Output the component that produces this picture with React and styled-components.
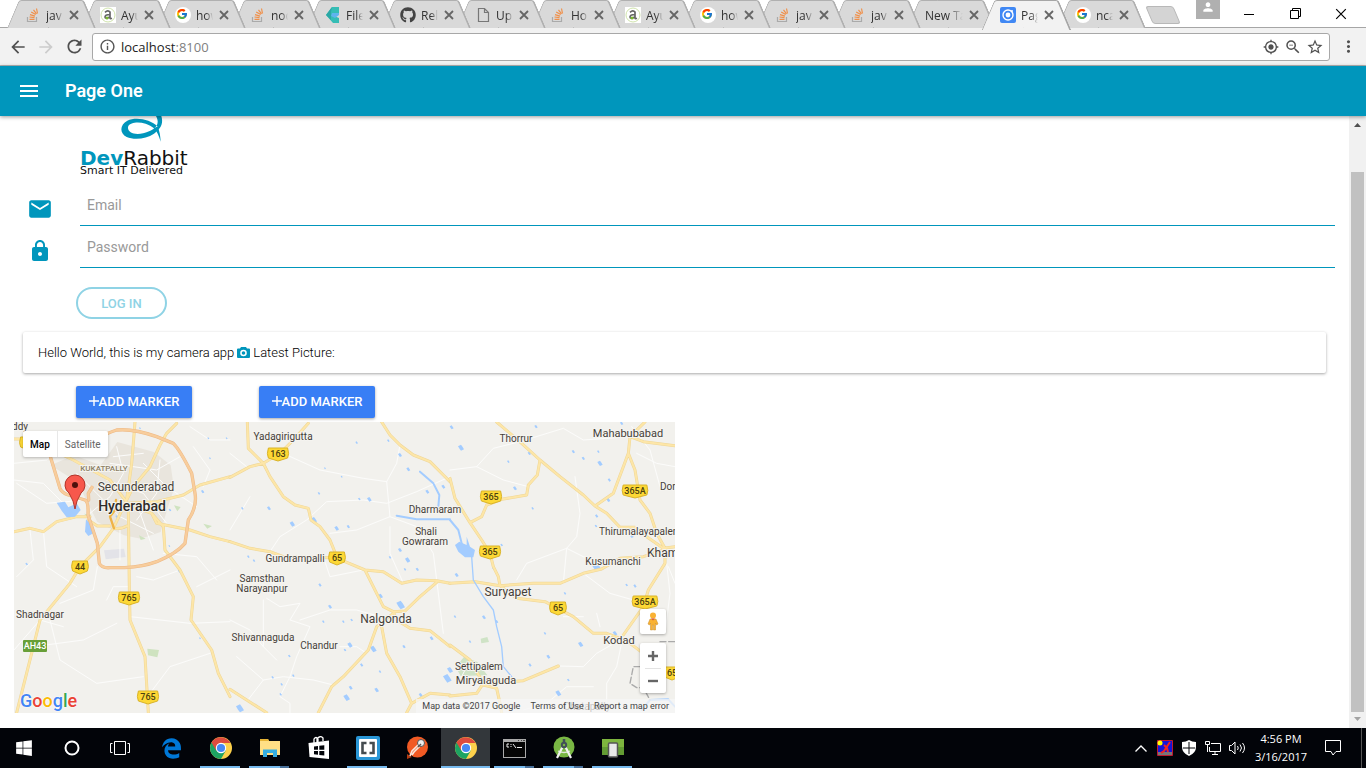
import React from "react";
import styled, { createGlobalStyle, css } from "styled-components";
import {
  MdArrowBack, MdArrowForward, MdRefresh, MdInfoOutline, MdGpsFixed, MdZoomOut,
  MdStarBorder, MdMoreVert, MdPerson, MdEmail, MdLock, MdMenu,
} from "react-icons/md";
import { FaWindows, FaEdgeLegacy, FaGithub, FaStackOverflow } from "react-icons/fa6";
import { FcGoogle } from "react-icons/fc";

const uiFont = `"Open Sans", "Noto Sans", sans-serif`;
const teal = "#0096bc";

const GlobalStyle = createGlobalStyle`
  * { box-sizing: border-box; }
  body { margin: 0; background: #fff; font-family: Roboto, sans-serif; color: #000; }
  button, input { font-family: inherit; }
  button { border: 0; padding: 0; background: none; cursor: pointer; }
  svg { display: block; flex: none; }
`;

const Desktop = styled.div`
  display: flex;
  flex-direction: column;
  min-height: 100vh;
  overflow: hidden;
`;

/* ---------- browser frame ---------- */

const TabStrip = styled.div`
  display: flex;
  height: 28px;
  padding: 0 2px 0 7px;
  background: #fff;
  border-bottom: 1px solid #a6a6a6;
`;

const tabHalf = css`
  content: "";
  position: absolute;
  z-index: -1;
  top: 0;
  height: ${(p) => (p.$active ? 29 : 27)}px;
  background: ${(p) => (p.$active ? "#f2f2f2" : "#d9d9d9")};
  border: 0 solid ${(p) => (p.$active ? "#a6a6a6" : "#b0b0b0")};
  border-top-width: 1px;
`;

const Tab = styled.div`
  position: relative;
  z-index: ${(p) => p.$level};
  isolation: isolate;
  flex: none;
  display: flex;
  align-items: center;
  gap: 6px;
  width: 89px;
  height: 28px;
  margin-right: -14px;
  padding: 2px 17px 0 18px;
  font: 12px ${uiFont};
  color: #333;
  &::before {
    ${tabHalf}
    left: 6px;
    width: 40px;
    border-left-width: 1px;
    transform: skewX(-23deg);
    border-top-left-radius: 3px;
  }
  &::after {
    ${tabHalf}
    right: 6px;
    width: 45px;
    border-right-width: 2px;
    transform: skewX(23deg);
    border-top-right-radius: 3px;
  }
`;

const TabIcon = styled.span`
  display: flex;
  justify-content: center;
  width: 15px;
`;

const TabTitle = styled.span`
  flex: 1;
  min-width: 0;
  overflow: hidden;
  white-space: nowrap;
  mask-image: linear-gradient(to right, #000 60%, transparent);
`;

const TabClose = styled.button`
  flex: none;
  width: 10px;
  height: 10px;
`;

const NewTabButton = styled.button`
  flex: none;
  width: 28px;
  height: 18px;
  margin: 6px 0 0 17px;
  background: #d4d4d4;
  border: 1px solid #b8b8b8;
  border-radius: 3px;
  transform: skewX(23deg);
`;

const WindowControls = styled.div`
  display: flex;
  margin-left: auto;
`;

const UserBadge = styled.button`
  display: flex;
  justify-content: center;
  width: 24px;
  height: 19px;
  margin-right: 6px;
  background: #b0b0b0;
  color: #fff;
`;

const WindowButton = styled.button`
  display: flex;
  align-items: center;
  justify-content: center;
  width: 46px;
  height: 27px;
`;

const Toolbar = styled.div`
  display: flex;
  align-items: center;
  height: 38px;
  padding-left: 8px;
  background: #f2f2f2;
  border-bottom: 1px solid #b4b4b4;
`;

const ToolButton = styled.button`
  display: flex;
  align-items: center;
  justify-content: center;
  width: ${(p) => p.$width}px;
  height: 28px;
  color: ${(p) => (p.$faded ? "#ccc" : "#505050")};
`;

const AddressBar = styled.div`
  flex: 1;
  display: flex;
  align-items: center;
  height: 28px;
  margin-left: 8px;
  padding: 0 3px 0 6px;
  background: #fff;
  border: 1px solid #a8a8a8;
  border-radius: 3px;
  color: #555;
`;

const Address = styled.div`
  flex: 1;
  padding: 0 5px;
  font: 13px ${uiFont};
  color: #222;
  span { color: #808080; }
`;

/* ---------- app page ---------- */

const AppHeader = styled.header`
  position: relative;
  z-index: 1;
  display: flex;
  align-items: center;
  gap: 24px;
  height: 50px;
  padding-left: 17px;
  background: ${teal};
  color: #fff;
  box-shadow: 0 1px 4px rgba(0, 0, 0, 0.4);
  h1 { margin: 0; font-size: 18px; font-weight: 600; line-height: 24px; }
`;

const MenuButton = styled.button`
  color: #fff;
`;

const Viewport = styled.div`
  flex: 1;
  display: flex;
`;

const Content = styled.main`
  flex: 1;
  min-width: 0;
  padding-bottom: 15px;
`;

const Logo = styled.div`
  display: flex;
  flex-direction: column;
  width: 112px;
  height: 60px;
  margin-left: 80px;
  font-family: "DejaVu Sans", Verdana, sans-serif;
  color: #111;
  svg { margin-left: 40px; }
  strong { color: ${teal}; }
`;

const LogoName = styled.span`
  font-size: 20px;
  line-height: 22px;
  padding-top: 4px;
  height: 22px;
`;

const LogoTagline = styled.span`
  font-size: 11px;
  line-height: 12px;
  white-space: nowrap;
`;

const LoginForm = styled.form`
  margin: 8px 14px 0 0;
`;

const Field = styled.label`
  display: flex;
  color: ${teal};
`;

const FieldIcon = styled.span`
  display: flex;
  align-items: center;
  justify-content: center;
  width: 80px;
  height: 42px;
  padding-top: 8px;
`;

const FieldInput = styled.input`
  flex: 1;
  height: 42px;
  padding: 0 7px;
  border: 0;
  border-bottom: 1px solid ${teal};
  outline: 0;
  background: none;
  font-size: 14px;
  &::placeholder { color: #999; opacity: 1; }
`;

const LoginButton = styled.button`
  display: block;
  width: 91px;
  height: 32px;
  margin: 19px 0 0 76px;
  border: 2px solid #8fd3e5;
  border-radius: 16px;
  color: #8fd3e5;
  font-size: 13px;
  font-weight: 500;
`;

const CameraCard = styled.section`
  display: flex;
  align-items: center;
  gap: 3px;
  height: 41px;
  margin: 13px 23px 0;
  padding: 0 15px;
  border-radius: 2px;
  background: #fff;
  box-shadow: 0 1px 3px rgba(0, 0, 0, 0.35);
  font-size: 13px;
  font-weight: 300;
`;

const MarkerActions = styled.div`
  display: flex;
  gap: 67px;
  margin: 13px 0 4px 76px;
`;

const MarkerButton = styled.button`
  display: flex;
  align-items: center;
  justify-content: center;
  width: 116px;
  height: 32px;
  padding-bottom: 2px;
  border-radius: 2px;
  background: #387ef5;
  color: #fff;
  box-shadow: 0 1px 3px rgba(0, 0, 0, 0.35);
  font-size: 13px;
  font-weight: 500;
`;

const ScrollTrack = styled.div`
  display: flex;
  flex-direction: column;
  align-items: center;
  justify-content: space-between;
  width: 17px;
  padding: 7px 0 6px;
  background: #f1f1f1;
`;

const ScrollThumb = styled.div`
  flex: 1;
  width: 13px;
  margin: 44px 0 5px;
  background: #c1c1c1;
`;

/* ---------- map ---------- */

const MapFrame = styled.section`
  position: relative;
  width: 49%;
  height: 291px;
  margin-left: 14px;
  overflow: hidden;
  background: #f2f1ed;
  > svg { width: 100%; height: 100%; }
`;

const MapTypeSwitch = styled.div`
  position: absolute;
  top: 9px;
  left: 9px;
  display: flex;
  background: #fff;
  border-radius: 2px;
  box-shadow: 0 1px 3px rgba(0, 0, 0, 0.25);
`;

const MapType = styled.button`
  height: 26px;
  padding: 0 7px;
  border-left: ${(p) => (p.$active ? "0" : "1px solid #e8e8e8")};
  font-size: 10px;
  font-weight: ${(p) => (p.$active ? 500 : 400)};
  color: ${(p) => (p.$active ? "#000" : "#666")};
`;

const MapControls = styled.div`
  position: absolute;
  right: 9px;
  bottom: 20px;
  display: flex;
  flex-direction: column;
  gap: 9px;
`;

const ControlBox = styled.div`
  display: flex;
  flex-direction: column;
  width: 26px;
  background: #fff;
  border-radius: 2px;
  box-shadow: 0 1px 3px rgba(0, 0, 0, 0.3);
`;

const ControlButton = styled.button`
  display: flex;
  align-items: center;
  justify-content: center;
  height: 25px;
`;

const ControlDivider = styled.div`
  height: 1px;
  margin: 0 5px -1px;
  background: #e3e3e3;
`;

const Attribution = styled.div`
  position: absolute;
  right: 0;
  bottom: 0;
  display: flex;
  gap: 10px;
  padding: 0 6px;
  height: 14px;
  background: rgba(245, 245, 245, 0.75);
  font-size: 9px;
  line-height: 14px;
  color: #444;
  a { color: inherit; text-decoration: none; }
`;

const MapLinks = styled.span`
  display: flex;
  gap: 4px;
`;

const MapMark = styled.span`
  position: absolute;
  left: 6px;
  bottom: 2px;
  font: 500 18px/20px Roboto, sans-serif;
  text-shadow: 0 0 1px #fff, 0 0 2px #fff;
`;

const Letter = styled.span`
  color: ${(p) => p.$color};
`;

/* ---------- taskbar ---------- */

const Taskbar = styled.footer`
  display: flex;
  justify-content: space-between;
  height: 40px;
  background: #020409;
  color: #fff;
`;

const TaskGroups = styled.div`
  display: flex;
  gap: 3px;
`;

const TaskGroup = styled.div`
  display: flex;
`;

const TaskButton = styled.button`
  position: relative;
  display: flex;
  align-items: center;
  justify-content: center;
  width: ${(p) => (p.$narrow ? 48 : 49)}px;
  height: 40px;
  color: #fff;
  background: ${(p) => (p.$state === "active" ? "#33373b" : "none")};
  &::after {
    content: "";
    position: absolute;
    bottom: 0;
    left: ${(p) => (p.$state === "active" ? 0 : 4)}px;
    right: ${(p) => (p.$state === "active" ? 0 : 5)}px;
    height: 2px;
    background: ${(p) =>
      !p.$state ? "none"
      : p.$state === "stacked" ? "linear-gradient(to right, #76b9ed 78%, #48709a 78%)"
      : "#76b9ed"};
  }
`;

const Tray = styled.div`
  display: flex;
  align-items: center;
`;

const TrayButton = styled.button`
  display: flex;
  align-items: center;
  justify-content: center;
  width: 24px;
  height: 40px;
`;

const Clock = styled.div`
  width: 64px;
  margin-right: 4px;
  text-align: center;
  font: 11px/18px ${uiFont};
`;

const ActionCenter = styled(TrayButton)`
  width: 32px;
  margin-right: 12px;
`;

const ShowDesktop = styled.div`
  width: 5px;
  height: 40px;
  border-left: 1px solid #555;
`;

/* ---------- small drawings ---------- */

const AyuIcon = () => (
  <svg width="16" height="16" viewBox="0 0 16 16">
    <rect width="16" height="16" fill="#fff" />
    <circle cx="8" cy="8" r="7" fill="none" stroke="#cfe3ab" />
    <path d="M5 5.3Q8 2.5 10 5V11Q10 12 12 11.3M10 7.5Q5 7.5 5 10T10 10" fill="none" stroke="#666" strokeWidth="1.7" />
    <circle cx="7" cy="11" r="1.5" fill="#79b82d" />
  </svg>
);
const FileStackIcon = () => (
  <svg width="14" height="16" viewBox="0 0 14 16">
    <path d="M6 0H13V6L8 9L13 11V16H7L0 8Z" fill="#35bdb5" />
    <path d="M6 0 0 8 5 13V5Z" fill="#2aa7a5" />
    <path d="M6 6h7v2l-4 3-4-2Z" fill="#5fb3ee" />
  </svg>
);
const PageIcon = () => (
  <svg width="16" height="16" viewBox="0 0 16 16" fill="none" stroke="#777" strokeWidth="1.2">
    <path d="M3.5 1.5h6l4 4v9h-10zM9.5 1.5v4h4" />
  </svg>
);
const IonicIcon = () => (
  <svg width="16" height="16" viewBox="0 0 16 16">
    <rect width="16" height="16" rx="2" fill="#4088f4" />
    <circle cx="8" cy="8" r="5" fill="none" stroke="#fff" strokeWidth="1.4" />
    <circle cx="8" cy="8" r="2.4" fill="#fff" />
    <circle cx="12" cy="4" r="1" fill="#fff" />
  </svg>
);
const StackIcon = () => (
  <svg width="13" height="15" viewBox="0 0 13 15" fill="none">
    <path d="M1.500 9v4.500h9V9" stroke="#aaa" strokeWidth="1.200" />
    <path d="M3.500 11.300h5M3.500 9l5 .6M4 6.600l5 1.500M5.200 4l4.500 2.600M7.500 1.800l3 4M10.500.5l1 5" stroke="#f0904a" strokeWidth="1.200" />
  </svg>
);
const GoogleIcon = () => (
  <svg width="16" height="16" viewBox="0 0 16 16">
    <circle cx="8" cy="8" r="8" fill="#fff" />
    <FcGoogle x="1" y="1" width="14" height="14" />
  </svg>
);
const GitIcon = () => <FaGithub size={16} color="#444" />;

const ChromeIcon = () => (
  <svg width="22" height="22" viewBox="0 0 22 22">
    <circle cx="11" cy="11" r="11" fill="#fcd04b" />
    <path d="M11 11 1.5 5.5A11 11 0 0 0 11 22L15.8 13.6Z" fill="#1da462" />
    <path d="M1.5 5.5A11 11 0 0 1 20.5 6H11L6.5 14Z" fill="#dd4b3e" />
    <circle cx="11" cy="11" r="5.2" fill="#fff" />
    <circle cx="11" cy="11" r="4.1" fill="#4688f4" />
  </svg>
);
const ExplorerIcon = () => (
  <svg width="22" height="20" viewBox="0 0 22 20">
    <path d="M1 1h8l1 2h11v14H1z" fill="#ffdf85" />
    <path d="M1 1h8l1 2H1z" fill="#e6b436" />
    <path d="M4 19v-7.500h14V19h-4v-4H8v4z" fill="#35aee2" />
  </svg>
);
const StoreIcon = () => (
  <svg width="24" height="24" viewBox="0 0 24 24">
    <path d="M1.500 7 22 4.500V23L2.500 21z" fill="#fff" />
    <path d="M7 7V3q2-3 4 0v3M10 6V3q3-4 6-1v3" fill="none" stroke="#fff" strokeWidth="1.300" />
    <path d="M7 10.500l4-.5v3.700H7zM12.300 9.800l5-.6v4.500h-5zM7 15h4v3.700l-4-.5zM12.300 15h5v4.500l-5-.6z" fill="#020409" />
  </svg>
);
const BracketsIcon = () => (
  <svg width="24" height="24" viewBox="0 0 24 24">
    <rect width="24" height="24" rx="2" fill="#2996d6" />
    <rect x="3" y="3" width="18" height="18" rx="1" fill="#fff" />
    <path d="M10.500 7H6.500v10h4M13.500 7h4v10h-4" fill="none" stroke="#454c50" strokeWidth="2.600" />
  </svg>
);
const PostmanIcon = () => (
  <svg width="24" height="24" viewBox="0 0 24 24">
    <circle cx="12.500" cy="11" r="10.500" fill="#f15a24" />
    <path d="M2 18v5l5-2z" fill="#b23b12" />
    <path d="M14 8 7 15l-2 5M15 10 9 16l-2 3" fill="none" stroke="#f8e6dc" strokeWidth="1.600" />
    <circle cx="16" cy="7" r="3.500" fill="#eee" stroke="#555" />
    <path d="m13 11 3-3" stroke="#555" strokeWidth="1.500" />
  </svg>
);
const TerminalIcon = () => (
  <svg width="23" height="19" viewBox="0 0 23 19">
    <rect width="23" height="19" fill="#aaa" />
    <rect x="1" y="3" width="21" height="15" fill="#050505" />
    <path d="M6 5H4v3h2M8 5v1m0 1v1m2-3 3 4M14 8.500h5" fill="none" stroke="#eee" />
    <path d="M15 1.500h1m2 0h1m1 0h2" stroke="#444" />
  </svg>
);
const StudioIcon = () => (
  <svg width="22" height="24" viewBox="0 0 22 24">
    <circle cx="11" cy="11" r="10.500" fill="#79b744" />
    <path d="M5 15q6 3 12 0" fill="none" stroke="#dfe8d8" strokeWidth="1.300" />
    <path d="M10 10 4 22M12 10l6 12" stroke="#f2f2f2" strokeWidth="2.200" />
    <path d="M11 3v5" stroke="#424f58" strokeWidth="2.500" />
    <circle cx="11" cy="9" r="3.200" fill="#424f58" />
    <circle cx="11" cy="9" r="1.200" fill="#79b744" />
  </svg>
);
const EmulatorIcon = () => (
  <svg width="22" height="20" viewBox="0 0 22 20">
    <path d="M0 1h22v16H0z" fill="#7db53e" />
    <path d="M0 9h22v8H0z" fill="#639c33" />
    <rect x="6.500" y="5" width="9" height="14" rx="1" fill="#e9e9e9" stroke="#555" strokeWidth="1.500" />
  </svg>
);

const XMark = ({ size = 10, color = "#666", width = 1.8 }) => (
  <svg width={size} height={size} viewBox="0 0 10 10" stroke={color} strokeWidth={width}>
    <path d="m1 1 8 8M9 1 1 9" />
  </svg>
);

/* ---------- map data ---------- */

// Each section of the map is digitised on its own grid, three units per pixel.
const sections = [
  {
    shift: "translate(-12 -6)",
    minor: "M12 180L100 190L170 260M12 130L110 120L140 90M60 330L70 420L20 470M100 330L110 440L200 500M12 690L90 600L160 620M150 550L250 510L262 440M358 500L310 500L290 540M360 590L540 610L660 605M70 680L220 660L320 610M510 450L430 480L380 470M560 500L660 450M300 130L440 150L510 110M200 160L260 220L330 290L430 340M320 80L340 160L300 230L240 280M400 130L470 200L560 260M290 180L400 220L470 310M380 300L440 220L450 120M280 260L380 250L430 390M550 80L600 150L580 200M540 20L600 60L660 60M460 400L560 410L620 480M120 600L150 720L260 790L400 770M600 700L480 740L420 820M20 190L110 250L230 240M310 110L400 100M330 330L330 420",
    roads: "M12 57L40 57M115 85L190 120L300 180L345 240M375 6L370 70L365 130L350 240M500 10L470 40L450 75L420 140L370 200L345 250M660 170L570 195L520 225L440 245L350 250M12 335L60 325L100 335L140 305L200 290L240 290M345 250L310 325L270 380L210 440L180 490L90 600L70 680L20 878M310 325Q335 328 350 318M355 270L358 500L360 600L405 710L415 878M345 250L425 280L460 320L465 390L510 450L550 530L543 600L605 690L625 760L660 830M425 280L440 310L540 330L600 350L660 365M235 300L262 318L300 318",
    water: "M0 0",
    lakes: [[578, 215, 5], [595, 55, 3], [600, 115, 3], [480, 270, 4], [508, 453, 5], [50, 432, 4], [478, 378, 3], [390, 25, 3], [570, 655, 3], [650, 55, 3], [352, 220, 5], [320, 290, 4]],
  },
  {
    shift: "translate(648 -6)",
    minor: "M170 105L270 150L400 175L470 185L500 130L510 75M120 395L150 350L230 300L290 245L400 240L470 250L560 215L660 170M470 185L480 290L380 330L300 340M110 535L150 560L210 550L180 600L240 620L200 710L180 770L150 830L180 850L180 878M210 600L300 570L380 570L450 590M100 540L100 680L140 720M50 845L100 780L160 770L250 780L310 795M0 600L60 630L100 680M330 680L380 680L410 700M480 290L560 320L610 400L630 560L640 640M60 230L0 330M400 450L300 470L280 410M480 320L480 400L520 490M0 100L50 140M20 710L100 780",
    roads: "M52 6L55 85L100 130L120 170L160 230L195 255L235 265L243 300L270 320L300 360L320 410L345 425L405 450L460 455L515 490L560 480L620 482L660 490M0 172L60 140L100 130L150 100L190 60L235 10M455 6L480 45L510 75L550 105L600 125L640 165L660 185M0 365L60 385L120 395L160 410L300 413M405 450L440 520L460 560L490 575L525 573L570 530L620 487M490 575L500 600L540 625L600 632L660 680M490 580L440 620L415 690L340 770L305 800L265 878M455 620L470 700L510 770L545 850L600 820L660 825M545 850L530 878M0 808L50 840L110 878",
    water: "M570 155L610 190L628 225L625 260M500 287L560 298L660 298",
    lakes: [[187, 312, 8], [252, 300, 9], [117, 265, 6], [37, 265, 4], [285, 145, 3], [267, 220, 4], [335, 170, 3], [380, 68, 4], [475, 62, 4], [510, 105, 6], [535, 148, 6], [592, 215, 6], [388, 237, 4], [418, 238, 7], [320, 325, 7], [355, 320, 5], [55, 410, 4], [72, 422, 4], [510, 390, 6], [480, 412, 4], [533, 420, 8], [525, 448, 4], [562, 448, 5], [270, 495, 5], [300, 560, 6], [280, 605, 4], [340, 605, 4], [365, 600, 4], [452, 528, 7], [512, 555, 13], [430, 687, 10], [360, 675, 8], [345, 690, 4], [178, 708, 4], [128, 772, 4], [190, 767, 4], [152, 823, 4], [155, 793, 4], [30, 865, 12], [395, 735, 5], [450, 755, 4], [362, 803, 6], [350, 833, 10], [440, 810, 7], [522, 680, 5], [605, 655, 6], [652, 775, 13], [572, 825, 6], [640, 200, 6]],
  },
  {
    shift: "translate(1308 -6)",
    minor: "M0 150L80 140L130 85L210 65M80 140L160 180L235 200M375 170L390 280L380 350L350 385L340 490M200 480L230 430L350 385L400 410L480 430M210 65L340 25L400 60L540 50M400 460L480 520L550 540M520 645L500 740L470 790L470 878M440 580L450 620M325 738L400 740L440 700L510 660M340 590L400 590M560 100L620 130L675 140M220 870L290 850L350 800L430 800M675 490L655 440M60 720L30 780M545 20L600 90L630 200M650 430L660 520L645 640",
    roads: "M140 6L215 70L270 120L330 170L400 225L435 258L470 280L510 322L555 322L590 350L640 385L675 380M270 120L262 165L235 195L230 225L155 238L110 255L95 290L60 308M0 175L15 235L60 308L95 360L120 400L130 440L145 470L150 497M0 490L75 485L150 497L250 490L330 490L400 460L455 447L510 415L580 410L640 390M435 258L490 220L520 140L535 100L540 50L585 6M540 50L580 65L675 77M535 100L555 150L570 240L600 280L620 340L645 385L645 430L595 510L580 560L520 645M150 497L200 535L285 545L370 590L430 640L470 640L510 655L540 670L580 700M0 675L60 720L100 790L80 820L0 828M100 790L220 782L325 738M100 795L140 805L150 850L155 878",
    water: "M0 300L25 330L35 370M575 870L600 840L655 838L675 860",
    lakes: [[33, 83, 9], [5, 22, 6], [258, 20, 5], [238, 100, 5], [175, 125, 4], [195, 205, 6], [400, 115, 5], [450, 130, 8], [478, 180, 5], [475, 240, 6], [515, 10, 5], [370, 95, 5], [440, 288, 5], [438, 318, 4], [248, 265, 4], [155, 375, 4], [545, 348, 6], [437, 437, 15], [530, 495, 4], [102, 592, 6], [140, 605, 5], [20, 465, 6], [130, 445, 4], [15, 590, 4], [285, 640, 4], [392, 673, 8], [345, 520, 4], [555, 498, 5], [295, 710, 6], [325, 820, 9], [240, 735, 5], [355, 780, 4], [495, 640, 7], [0, 750, 9], [60, 665, 4], [445, 95, 4]],
  },
];

const places = [
  ["ddy", -2, 4, 10, "start"], ["Secunderabad", 122, 65, 12], ["Yadagirigutta", 269, 14, 10],
  ["Thorrur", 502, 16, 10], ["Mahabubabad", 614, 11, 11], ["Dor", 646, 64, 10, "start"],
  ["Dharmaram", 421, 87, 10], ["Shali", 412, 109, 10], ["Gowraram", 411, 119, 10],
  ["Thirumalayapalem", 585, 109, 10, "start"], ["Khammam", 633, 131, 12, "start"],
  ["Kusumanchi", 599, 139, 10], ["Gundrampalli", 281, 136, 10], ["Samsthan", 248, 156, 10],
  ["Narayanpur", 248, 166, 10], ["Suryapet", 494, 170, 12], ["Nalgonda", 372, 197, 12],
  ["Kodad", 605, 218, 11], ["Shivannaguda", 249, 215, 10], ["Chandur", 305, 223, 10],
  ["Shadnagar", 2, 192, 10, "start"], ["Settipalem", 465, 244, 10], ["Miryalaguda", 472, 258, 11],
  ["Chatapally", 573, 284, 10],
];

const shields = [
  ["163", 264, 32], ["365", 477, 75], ["365A", 621, 69], ["365", 476, 130], ["65", 323, 136],
  ["65", 544, 186], ["365A", 631, 180], ["44", 66, 145], ["765", 115, 176], ["765", 134, 275],
  ["65", 658, 251], ["65", 14, 21],
];

const ringRoad =
  "M115 90L150 205Q155 218 175 225L225 240Q236 245 234 285L262 370L268 430Q275 445 300 443L345 443Q400 440 440 425Q500 400 525 370L535 300Q562 260 555 220L545 160Q510 90 490 70L440 50Q370 25 320 30Q290 40 280 48M236 240L235 220L246 202";

const lakePath = ([x, y, r]) =>
  `M${x - r} ${y - r / 2}L${x} ${y - r}L${x + r / 2} ${y - r / 3}L${x + r} ${y + r / 2}L${x} ${y + r}L${x - r / 2} ${y + r / 3}Z`;

function MapDrawing() {
  return (
    <svg viewBox="0 0 661 291" preserveAspectRatio="xMinYMin slice" fontFamily="Roboto, sans-serif">
      <g transform="scale(.33333)" fill="none" strokeLinejoin="round" strokeLinecap="round">
        <path d="M110 130L180 100L260 130L310 60L420 90L470 130L480 200L460 260L440 330L380 350L330 340L250 300L220 240L190 180Z" fill="#e9e5dd" />
        <path d="M270 385L330 380L335 405L275 412Z" fill="#e3e3e8" />
        <path d="M480 250L500 255L490 268ZM400 680L435 684L430 706L402 700ZM568 305L594 312L580 320ZM210 275L232 278L225 287ZM375 340L395 350L380 354Z" fill="#cfe3c0" />
        <path d="M1325 735L1350 705L1390 720L1420 760L1340 762ZM1400 650L1420 645L1425 660L1402 664Z" fill="#cfe3c6" />
        {sections.map((s) => (
          <g key={s.shift} transform={s.shift}>
            <path d={s.minor} stroke="#fcfcfb" strokeWidth="3" />
            <path d={s.water} stroke="#a3ccff" strokeWidth="6" />
            <path d={s.lakes.map(lakePath).join("")} fill="#a3ccff" />
            <path d={s.roads} stroke="#eed697" strokeWidth="9" />
            <path d={s.roads} stroke="#fde6a8" strokeWidth="6" />
          </g>
        ))}
        <g transform="translate(-12 -6)">
          <path d="M140 248L165 245L175 262L200 250L212 270L195 290L170 292L155 272ZM228 298L245 315L250 340L235 348L225 335Z" fill="#a3ccff" />
          <path d={ringRoad} stroke="#edb986" strokeWidth="10" />
          <path d={ringRoad} stroke="#f8cd9c" strokeWidth="7" />
          <path d="M318 240L315 270L300 290L312 325" stroke="#efb346" strokeWidth="7" />
        </g>
        <g transform="translate(1308 -6)">
          <path d="M15 375L28 365L50 375L50 350L60 380L75 390L70 412L45 412L25 395Z" fill="#a3ccff" />
          <path d="M65 410L70 480L100 530L130 570L140 620L155 680L160 740L185 770" stroke="#a3ccff" strokeWidth="4" />
          <path d="M570 740H550L540 790L560 803H580L600 840M630 665H675" stroke="#aaa" strokeWidth="4" strokeDasharray="18 8" />
        </g>
      </g>
      <g fill="#454039" stroke="#f5f4f0" strokeWidth="2" paintOrder="stroke" dominantBaseline="central" textAnchor="middle">
        {places.map(([name, x, y, size, anchor]) => (
          <text key={name} x={x} y={y} fontSize={size} textAnchor={anchor}>{name}</text>
        ))}
        <text x="118" y="84" fontSize="14" fontWeight="500" fill="#2f2c28">Hyderabad</text>
        <text x="90" y="46" fontSize="8" fontWeight="500" fill="#8c8065">KUKATPALLY</text>
      </g>
      <g fontSize="9" fontWeight="500" dominantBaseline="central" textAnchor="middle">
        {shields.map(([number, x, y]) => {
          const half = 3 + number.length * 2.2;
          return (
            <g key={`${x}-${y}`}>
              <path d={`M${x - half} ${y - 6}H${x + half}Q${x + half + 2} ${y} ${x + half} ${y + 4}L${x} ${y + 7}L${x - half} ${y + 4}Q${x - half - 2} ${y} ${x - half} ${y - 6}Z`} fill="#fdd835" stroke="#d9b32a" />
              <text x={x} y={y} fill="#4b3f10">{number}</text>
            </g>
          );
        })}
        <rect x="9" y="218" width="24" height="12" rx="1" fill="#689f38" />
        <text x="21" y="224" fill="#fff">AH43</text>
      </g>
      <path d="M61 87Q60 79 55 71A10 10 0 1 1 67 71Q62 79 61 87Z" fill="#f7584c" stroke="#b23228" />
      <circle cx="61" cy="63" r="3" fill="#4d100c" />
    </svg>
  );
}

const tabs = [
  ["jav", StackIcon], ["Ayu", AyuIcon], ["how", GoogleIcon], ["nod", StackIcon],
  ["File", FileStackIcon], ["Rel", GitIcon], ["Up", PageIcon], ["Ho", StackIcon],
  ["Ayu", AyuIcon], ["how", GoogleIcon], ["jav", StackIcon], ["jav", StackIcon],
  ["New Ta", null], ["Pag", IonicIcon, true], ["nca", GoogleIcon],
];

const systemApps = [
  ["Start", <FaWindows size={18} />],
  ["Cortana", <svg width="16" height="16" viewBox="0 0 16 16"><circle cx="8" cy="8" r="6.500" fill="none" stroke="#fff" strokeWidth="2" /></svg>],
  ["Task view", <svg width="20" height="16" viewBox="0 0 20 16" fill="none" stroke="#fff"><path d="M4.500 1.500h11v13h-11zM2.500 3.500h-2v9h2M17.500 3.500h2v9h-2" /></svg>],
];

const apps = [
  ["Edge", <FaEdgeLegacy size={21} color="#0078d7" />],
  ["Chrome", <ChromeIcon />, "open"],
  ["File Explorer", <ExplorerIcon />, "stacked"],
  ["Store", <StoreIcon />],
  ["Brackets", <BracketsIcon />, "open"],
  ["Postman", <PostmanIcon />],
  ["Chrome window", <ChromeIcon />, "active"],
  ["Command Prompt", <TerminalIcon />, "stacked"],
  ["Android Studio", <StudioIcon />, "stacked"],
  ["Emulator", <EmulatorIcon />, "open"],
];

const markerLabel = (
  <>
    <svg width="10" height="10" viewBox="0 0 10 10" stroke="#fff" strokeWidth="1.400"><path d="M5 0v10M0 5h10" /></svg>
    ADD MARKER
  </>
);

export default function App() {
  return (
    <Desktop>
      <GlobalStyle />
      <TabStrip>
        {tabs.map(([title, Icon, active], i) => (
          <Tab key={i} $active={active} $level={active ? 30 : 20 - i}>
            {Icon && <TabIcon><Icon /></TabIcon>}
            <TabTitle>{title}</TabTitle>
            <TabClose aria-label="Close tab"><XMark /></TabClose>
          </Tab>
        ))}
        <NewTabButton aria-label="Open a new tab" />
        <WindowControls>
          <UserBadge aria-label="Profile"><MdPerson size={14} /></UserBadge>
          <WindowButton aria-label="Minimize"><svg width="10" height="10" stroke="#000"><path d="M0 5.500h10" /></svg></WindowButton>
          <WindowButton aria-label="Restore">
            <svg width="11" height="11" fill="none" stroke="#000"><path d="M.5 2.500h8v8h-8zM2.500 2V.5h8v8H9" /></svg>
          </WindowButton>
          <WindowButton aria-label="Close window"><XMark size={12} color="#000" width={1} /></WindowButton>
        </WindowControls>
      </TabStrip>
      <Toolbar>
        <ToolButton aria-label="Back" $width={20}><MdArrowBack size={20} /></ToolButton>
        <ToolButton aria-label="Forward" $width={36} $faded><MdArrowForward size={20} /></ToolButton>
        <ToolButton aria-label="Reload" $width={20}><MdRefresh size={21} /></ToolButton>
        <AddressBar>
          <MdInfoOutline size={17} />
          <Address>localhost<span>:8100</span></Address>
          <ToolButton aria-label="Location" $width={22}><MdGpsFixed size={16} /></ToolButton>
          <ToolButton aria-label="Zoom" $width={22}><MdZoomOut size={18} /></ToolButton>
          <ToolButton aria-label="Bookmark" $width={22}><MdStarBorder size={18} /></ToolButton>
        </AddressBar>
        <ToolButton aria-label="Browser menu" $width={36}><MdMoreVert size={19} /></ToolButton>
      </Toolbar>

      <AppHeader>
        <MenuButton aria-label="Menu"><MdMenu size={24} /></MenuButton>
        <h1>Page One</h1>
      </AppHeader>

      <Viewport>
        <Content>
          <Logo>
            <svg width="44" height="27" viewBox="360 168 132 81">
              <path d="M473 200C479 213 481 228 482 245C477 228 472 216 462 205Z" fill={teal} />
              <path fillRule="evenodd" d="M468 168H484C491 190 482 207 462 221C438 238 401 240 380 231C357 220 360 193 382 182C408 170 452 178 473 200L462 205C455 199 447 195 437 191C415 184 391 187 385 198C380 211 393 222 413 222C435 222 459 211 469 199C475 189 474 179 468 168Z" fill={teal} />
            </svg>
            <LogoName><strong>Dev</strong>Rabbit</LogoName>
            <LogoTagline>Smart IT Delivered</LogoTagline>
          </Logo>
          <LoginForm onSubmit={(e) => e.preventDefault()}>
            <Field>
              <FieldIcon><MdEmail size={26} /></FieldIcon>
              <FieldInput type="email" placeholder="Email" aria-label="Email" />
            </Field>
            <Field>
              <FieldIcon><MdLock size={24} /></FieldIcon>
              <FieldInput type="password" placeholder="Password" aria-label="Password" />
            </Field>
            <LoginButton>LOG IN</LoginButton>
          </LoginForm>
          <CameraCard>
            <span>Hello World, this is my camera app</span>
            <svg width="13" height="11" viewBox="0 0 13 11">
              <path fillRule="evenodd" d="M4 0h5l1 1.500h2a1 1 0 0 1 1 1V10a1 1 0 0 1-1 1H1a1 1 0 0 1-1-1V2.500a1 1 0 0 1 1-1h2zM6.500 2.700a3.300 3.300 0 1 0 0 6.600a3.300 3.300 0 0 0 0-6.600zm0 1.500a1.800 1.800 0 1 1 0 3.600a1.800 1.800 0 0 1 0-3.600z" fill={teal} />
            </svg>
            <span>Latest Picture:</span>
          </CameraCard>
          <MarkerActions>
            <MarkerButton>{markerLabel}</MarkerButton>
            <MarkerButton>{markerLabel}</MarkerButton>
          </MarkerActions>
          <MapFrame>
            <MapDrawing />
            <MapTypeSwitch>
              <MapType $active>Map</MapType>
              <MapType>Satellite</MapType>
            </MapTypeSwitch>
            <MapMark>
              {[["G", "#4285f4"], ["o", "#ea4335"], ["o", "#fbbc05"], ["g", "#4285f4"], ["l", "#34a853"], ["e", "#ea4335"]].map(([c, color], i) => (
                <Letter key={i} $color={color}>{c}</Letter>
              ))}
            </MapMark>
            <Attribution>
              <span>Map data ©2017 Google</span>
              <MapLinks><a href="#terms">Terms of Use</a><span>|</span><a href="#report">Report a map error</a></MapLinks>
            </Attribution>
            <MapControls>
              <ControlBox>
                <ControlButton aria-label="Street view">
                  <svg width="12" height="19" viewBox="0 0 12 19">
                    <circle cx="6" cy="3.500" r="3" fill="#f9b233" />
                    <path d="M3 7h6l2 5-1.500 1-1-2V18H6.500v-5h-1v5H3.500v-7l-1 2L1 12z" fill="#f9b233" stroke="#c98c2a" strokeWidth=".5" />
                    <path d="m4 6.500 2 2 2-2z" fill="#e0533a" />
                  </svg>
                </ControlButton>
              </ControlBox>
              <ControlBox>
                <ControlButton aria-label="Zoom in"><svg width="10" height="10" stroke="#666" strokeWidth="2.400"><path d="M5 0v10M0 5h10" /></svg></ControlButton>
                <ControlDivider />
                <ControlButton aria-label="Zoom out"><svg width="10" height="10" stroke="#666" strokeWidth="2.400"><path d="M0 5h10" /></svg></ControlButton>
              </ControlBox>
            </MapControls>
          </MapFrame>
        </Content>
        <ScrollTrack>
          <svg width="7" height="5"><path d="M0 4h7L3.500 0z" fill="#505050" /></svg>
          <ScrollThumb />
          <svg width="7" height="5"><path d="M0 0h7L3.500 4z" fill="#a3a3a3" /></svg>
        </ScrollTrack>
      </Viewport>

      <Taskbar>
        <TaskGroups>
          <TaskGroup>
            {systemApps.map(([name, icon]) => (
              <TaskButton key={name} aria-label={name} $narrow>{icon}</TaskButton>
            ))}
          </TaskGroup>
          <TaskGroup>
            {apps.map(([name, icon, state]) => (
              <TaskButton key={name} aria-label={name} $state={state}>{icon}</TaskButton>
            ))}
          </TaskGroup>
        </TaskGroups>
        <Tray>
          <TrayButton aria-label="Show hidden icons">
            <svg width="12" height="7" fill="none" stroke="#fff" strokeWidth="1.300"><path d="m.5 6.500 5.500-5.500 5.500 5.500" /></svg>
          </TrayButton>
          <TrayButton aria-label="Display utility">
            <svg width="16" height="16" viewBox="0 0 16 16">
              <path d="M.5.5h15v15H.5z" fill="#1414d8" stroke="#c01830" />
              <circle cx="3" cy="3" r="2.500" fill="#ff0" />
              <path d="M1 12h14v3H1z" fill="#777" />
              <path d="m13 2-6 9-3 2M7 5l3 3 1 4" fill="none" stroke="#f3251e" strokeWidth="2" />
            </svg>
          </TrayButton>
          <TrayButton aria-label="Security">
            <svg width="16" height="16" viewBox="0 0 16 16"><path d="M8 0q3 2 7 2v5q0 6-7 9Q1 13 1 7V2q4 0 7-2z" fill="#fff" /><path d="M8 2v12M2 8h12" stroke="#020409" /></svg>
          </TrayButton>
          <TrayButton aria-label="Network">
            <svg width="16" height="14" viewBox="0 0 16 14" fill="none" stroke="#fff"><path d="M6 2.500h9.500v8H4.500V6M10 11v2M7 13.500h6M.5.500h4v3h-4zM2.500 4v7" /></svg>
          </TrayButton>
          <TrayButton aria-label="Volume">
            <svg width="17" height="14" viewBox="0 0 17 14" fill="none" stroke="#fff"><path d="M.5 4.500h2L6 1v12L2.500 9.500h-2zM8.500 5q1.500 2 0 4M11 3.500q3 3.500 0 7M13.500 2q4 5 0 10" /></svg>
          </TrayButton>
          <Clock>4:56 PM<br />3/16/2017</Clock>
          <ActionCenter aria-label="Notifications">
            <svg width="16" height="16" viewBox="0 0 16 16" fill="none" stroke="#fff"><path d="M.5.5h15v11H11l-3 3.500-2-3.500H.5z" /></svg>
          </ActionCenter>
          <ShowDesktop />
        </Tray>
      </Taskbar>
    </Desktop>
  );
}
